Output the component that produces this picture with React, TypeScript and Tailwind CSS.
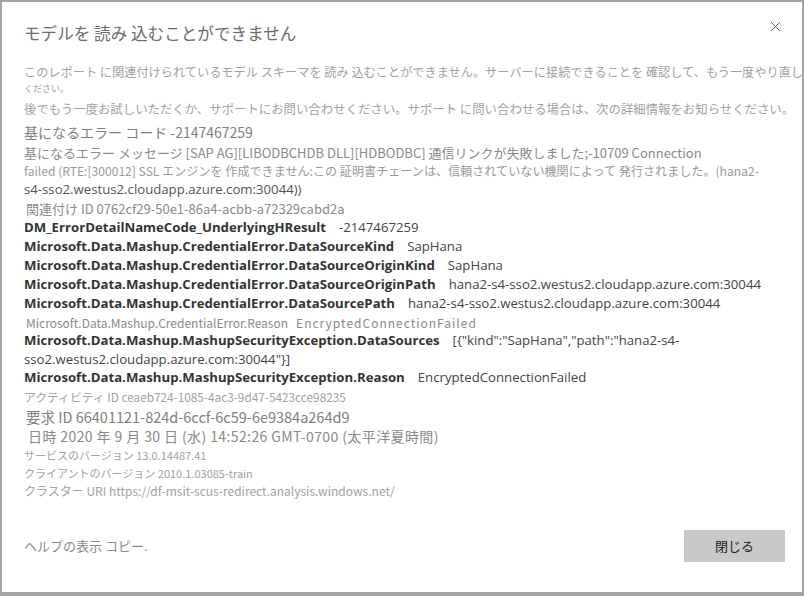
import { X } from "lucide-react";

const jp = "font-['Noto_Sans_CJK_JP',sans-serif]";
const seg = "font-['Open_Sans','Noto_Sans_CJK_JP',sans-serif]";

const Pair = ({ k, v, h }: { k: string; v: string; h: string }) => (
  <div className={`flex items-center whitespace-nowrap ${h} ${seg} text-[13.2px] text-[#333]`}>
    <span className="font-bold">{k}</span>
    <span className="ml-[13px] text-[#444]">{v}</span>
  </div>
);

const App = () => {
  return (
    <div className="w-[804px] h-[596px] bg-white border-2 border-b-4 border-[#a3a3a3] overflow-hidden flex flex-col">
      <div className="flex items-start justify-between pl-[22px] pr-[18px] pt-[18px]">
        <h1 className={`${jp} text-[16.6px] text-[#6b6b6b] leading-[26px]`}>
          モデルを 読み 込むことができません
        </h1>
        <button className="-mt-[2px] text-[#555]">
          <X size={17} strokeWidth={1.3} />
        </button>
      </div>

      <div className={`flex flex-col pl-[22px] mt-[18px] ${jp} text-[#a2a2a2]`}>
        <div className="h-[16px] flex items-center whitespace-nowrap overflow-hidden text-[12.2px]">
          このレポート に関連付けられているモデル スキーマを 読み 込むことができません。サーバーに接続できることを 確認して、もう一度やり直し
        </div>
        <div className="h-[18px] flex items-center text-[9px]">ください。</div>
        <div className="h-[22px] flex items-center whitespace-nowrap text-[12.4px]">
          後でもう一度お試しいただくか、サポートにお問い合わせください。サポート に問い合わせる場合は、次の詳細情報をお知らせください。
        </div>
        <div className="h-[24px] flex items-center text-[14px] text-[#808080]">
          基になるエラー コード -2147467259
        </div>
        <div className="h-[18px] flex items-center whitespace-nowrap text-[13px] text-[#8a8a8a]">
          基になるエラー メッセージ [SAP AG][LIBODBCHDB DLL][HDBODBC] 通信リンクが失敗しました;-10709 Connection
        </div>
        <div className="h-[18px] flex items-center whitespace-nowrap text-[12.1px] text-[#9a9a9a]">
          failed (RTE:[300012] SSL エンジンを 作成できません:この 証明書チェーンは、信頼されていない機関によって 発行されました。(hana2-
        </div>
        <div className={`h-[20px] flex items-center ${seg} text-[13.2px] text-[#555]`}>
          s4-sso2.westus2.cloudapp.azure.com:30044))
        </div>
        <div className="h-[18px] flex items-center pl-[2px] text-[13px] text-[#8a8a8a]">
          関連付け ID 0762cf29-50e1-86a4-acbb-a72329cabd2a
        </div>
        <Pair h="h-[19px]" k="DM_ErrorDetailNameCode_UnderlyingHResult" v="-2147467259" />
        <Pair h="h-[19px]" k="Microsoft.Data.Mashup.CredentialError.DataSourceKind" v="SapHana" />
        <Pair h="h-[19px]" k="Microsoft.Data.Mashup.CredentialError.DataSourceOriginKind" v="SapHana" />
        <Pair
          h="h-[19px]"
          k="Microsoft.Data.Mashup.CredentialError.DataSourceOriginPath"
          v="hana2-s4-sso2.westus2.cloudapp.azure.com:30044"
        />
        <Pair
          h="h-[19px]"
          k="Microsoft.Data.Mashup.CredentialError.DataSourcePath"
          v="hana2-s4-sso2.westus2.cloudapp.azure.com:30044"
        />
        <div className="h-[19px] flex items-center pl-[2px] whitespace-nowrap text-[12px] text-[#8a8a8a]">
          Microsoft.Data.Mashup.CredentialError.Reason
          <span className="ml-[8px] tracking-[1px]">EncryptedConnectionFailed</span>
        </div>
        <Pair
          h="h-[18px]"
          k="Microsoft.Data.Mashup.MashupSecurityException.DataSources"
          v={'[{"kind":"SapHana","path":"hana2-s4-'}
        />
        <div className={`h-[19px] flex items-center ${seg} text-[13.2px] text-[#444]`}>
          {'sso2.westus2.cloudapp.azure.com:30044"}]'}
        </div>
        <Pair h="h-[18px]" k="Microsoft.Data.Mashup.MashupSecurityException.Reason" v="EncryptedConnectionFailed" />
        <div className="h-[19px] flex items-center text-[11.8px] text-[#a2a2a2]">
          アクティビティ ID ceaeb724-1085-4ac3-9d47-5423cce98235
        </div>
        <div className="h-[21px] flex items-center pl-[2px] text-[14.5px] text-[#808080]">
          要求 ID 66401121-824d-6ccf-6c59-6e9384a264d9
        </div>
        <div className="h-[19px] flex items-center pl-[4px] text-[14px] tracking-[0.4px] text-[#8a8a8a]">
          日時 2020 年 9 月 30 日 (水) 14:52:26 GMT-0700 (太平洋夏時間)
        </div>
        <div className="h-[18px] flex items-center text-[11px] text-[#a2a2a2]">
          サービスのバージョン 13.0.14487.41
        </div>
        <div className="h-[18px] flex items-center text-[11px] text-[#a2a2a2]">
          クライアントのバージョン 2010.1.03085-train
        </div>
        <div className="h-[18px] flex items-center text-[12px] text-[#a2a2a2]">
          クラスター URI https://df-msit-scus-redirect.analysis.windows.net/
        </div>
      </div>

      <div className="mt-auto mb-[30px] flex items-center justify-between pl-[22px] pr-[17px]">
        <span className={`${jp} text-[13px] text-[#8a8a8a]`}>ヘルプの表示 コピー.</span>
        <button className={`${jp} w-[101px] h-[32px] bg-[#c8c8c8] text-[13px] text-[#222]`}>閉じる</button>
      </div>
    </div>
  );
};

export default App;
